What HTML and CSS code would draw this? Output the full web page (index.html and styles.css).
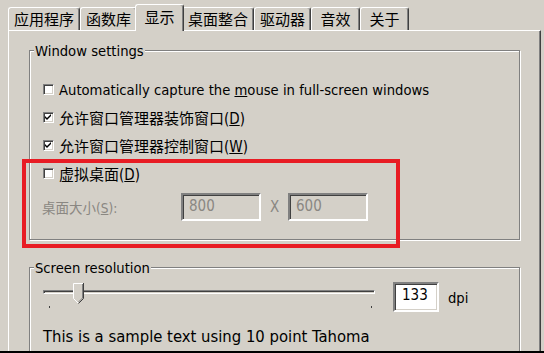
FILE: index.html
```html
<!DOCTYPE html>
<html lang="zh-CN">
<head>
    <meta charset="UTF-8">
    <meta name="viewport" content="width=device-width, initial-scale=1.0">
    <title>Wine 设置 - 显示</title>
    <link rel="stylesheet" href="styles.css">
</head>
<body>
    <div class="window">
        <div class="tabs">
            <div class="tab">应用程序</div>
            <div class="tab">函数库</div>
            <div class="tab active">显示</div>
            <div class="tab">桌面整合</div>
            <div class="tab">驱动器</div>
            <div class="tab">音效</div>
            <div class="tab">关于</div>
        </div>

        <div class="panel">
            <div class="group settings">
                <div class="legend">Window settings</div>
                <div class="rows">
                    <div class="row">
                        <span class="check"></span>
                        <span>Automatically capture the <u>m</u>ouse in full-screen windows</span>
                    </div>
                    <div class="row cjk">
                        <span class="check">
                            <svg width="7" height="7" viewBox="0 0 7 7"><path d="M0 2 L2 4 L6 0 V2 L2 6 L0 4 Z" fill="#000"/></svg>
                        </span>
                        <span>允许窗口管理器装饰窗口(<u>D</u>)</span>
                    </div>
                    <div class="row cjk">
                        <span class="check">
                            <svg width="7" height="7" viewBox="0 0 7 7"><path d="M0 2 L2 4 L6 0 V2 L2 6 L0 4 Z" fill="#000"/></svg>
                        </span>
                        <span>允许窗口管理器控制窗口(<u>W</u>)</span>
                    </div>
                    <div class="row cjk">
                        <span class="check"></span>
                        <span>虚拟桌面(<u>D</u>)</span>
                    </div>
                    <div class="size-row disabled">
                        <span class="size-label">桌面大小(<u>S</u>):</span>
                        <span class="field">800</span>
                        <span class="times">X</span>
                        <span class="field">600</span>
                    </div>
                </div>
            </div>

            <div class="group resolution">
                <div class="legend">Screen resolution</div>
                <div class="dpi-row">
                    <div class="slider">
                        <div class="track"></div>
                        <svg class="thumb" width="11" height="21" viewBox="0 0 11 21">
                            <path d="M0.5 0.5 H10.5 V15.5 L5.5 20.5 L0.5 15.5 Z" fill="#d4d0c8"/>
                            <path d="M0.5 15.5 V0.5 H10" stroke="#fff" fill="none"/>
                            <path d="M10.5 0 V15.5 L5.5 20.5" stroke="#404040" fill="none"/>
                            <path d="M9.5 1 V15 L5.5 19" stroke="#808080" fill="none"/>
                            <path d="M0.5 15.5 L5 20" stroke="#fff" fill="none"/>
                        </svg>
                        <span class="tick first"></span>
                        <span class="tick last"></span>
                    </div>
                    <span class="field white">133</span>
                    <span class="unit">dpi</span>
                </div>
                <p class="sample">This is a sample text using 10 point Tahoma</p>
            </div>
        </div>

        <!-- red annotation around the virtual desktop options -->
        <div class="annot"></div>
    </div>
</body>
</html>
```

FILE: styles.css
```css
body {
    margin: 0;
    padding: 0;
    font-family: "DejaVu Sans Condensed", "DejaVu Sans", "Noto Sans CJK SC", sans-serif;
    font-stretch: condensed;
    font-size: 11pt;
    color: #000;
    background-color: #d4d0c8;
}

.window {
    position: relative;
    width: 544px;
    height: 351px;
    overflow: hidden;
    border-bottom: 2px solid #000;
    background-color: #d4d0c8;
}

/* tab strip */
.tabs {
    display: flex;
    align-items: flex-end;
    height: 30px;
    padding-left: 8px;
    box-sizing: border-box;
}

.tab {
    height: 23px;
    min-width: 49px;
    padding: 0 5px;
    box-sizing: border-box;
    border-top: 1px solid #fff;
    border-left: 1px solid #fff;
    border-right: 1px solid #404040;
    border-radius: 3px 3px 0 0;
    box-shadow: inset -1px 0 #808080;
    font-family: "Noto Sans CJK SC", sans-serif;
    font-size: 15px;
    line-height: 21px;
    text-align: center;
    background-color: #d4d0c8;
}

.tab.active {
    height: 27px;
    margin: 0 -2px -1px;
    line-height: 24px;
    position: relative;
    z-index: 1;
}

/* page */
.panel {
    width: 533px;
    height: 330px;
    margin-left: 8px;
    padding: 19px 20px 0;
    box-sizing: border-box;
    border-top: 1px solid #fff;
    border-left: 1px solid #fff;
    border-right: 1px solid #404040;
    box-shadow: inset -1px 0 #808080;
}

.group {
    border: 1px solid #808080;
    box-shadow: inset 1px 1px #fff, 1px 1px #fff;
}

.legend {
    width: fit-content;
    margin: -9px 0 0 4px;
    padding: 0 1px;
    line-height: 17px;
    background-color: #d4d0c8;
}

.settings {
    padding-bottom: 18px;
}

.rows {
    padding: 16px 0 0 13px;
}

.row {
    display: flex;
    align-items: center;
    gap: 5px;
    height: 28px;
}

.row.cjk {
    font-size: 15px;
}

.check {
    width: 11px;
    height: 11px;
    box-sizing: border-box;
    border: 1px solid;
    border-color: #808080 #fff #fff #808080;
    box-shadow: inset 1px 1px #404040, inset -1px -1px #d4d0c8;
    background-color: #fff;
    display: flex;
    align-items: center;
    justify-content: center;
    flex-shrink: 0;
}

.check svg {
    display: block;
}

.size-row {
    display: flex;
    align-items: center;
    margin-top: 6px;
    font-size: 15px;
}

.disabled {
    color: #8a8782;
}

.size-label {
    width: 139px;
    margin-left: -1px;
    font-size: 13.5px;
}

.field {
    width: 80px;
    height: 28px;
    padding: 0 6px;
    box-sizing: border-box;
    border: 2px solid;
    border-color: #808080 #fff #fff #808080;
    box-shadow: inset 1px 1px #404040, inset -1px -1px #d4d0c8;
    line-height: 22px;
}

.times {
    width: 27px;
    text-align: center;
}

/* screen resolution */
.resolution {
    margin-top: 27px;
    height: 120px;
}

.dpi-row {
    display: flex;
    align-items: center;
    margin: 6px 0 0 13px;
}

.slider {
    position: relative;
    width: 332px;
    height: 30px;
    margin-right: 18px;
}

.track {
    margin-top: 8px;
    height: 2px;
    border: 1px solid;
    border-color: #808080 #fff #fff #808080;
    box-shadow: inset 1px 1px #404040;
}

.thumb {
    position: absolute;
    left: 30px;
    top: 1px;
}

.tick {
    position: absolute;
    top: 24px;
    width: 1px;
    height: 2px;
    background-color: #404040;
}

.tick.first {
    left: 6px;
}

.tick.last {
    left: 328px;
}

.field.white {
    width: 46px;
    height: 30px;
    padding: 0 7px;
    background-color: #fff;
    font-size: 15px;
    line-height: 22px;
}

.unit {
    margin-left: 9px;
}

.sample {
    margin: 15px 0 0 13px;
    font-size: 16.5px;
    line-height: 20px;
}

/* annotation */
.annot {
    position: absolute;
    left: 22px;
    top: 159px;
    width: 378px;
    height: 89px;
    box-sizing: border-box;
    border: 4px solid #e81c24;
}
```
